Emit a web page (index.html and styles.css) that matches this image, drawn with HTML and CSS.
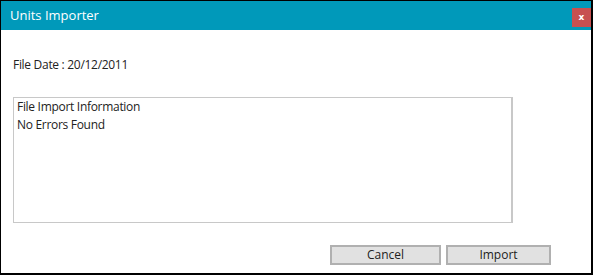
FILE: index.html
```html
<!DOCTYPE html>
<html>
<head>
    <title>Units Importer</title>
    <link rel="stylesheet" href="styles.css">
</head>
<body>
    <div class="window">
        <div class="titlebar">
            <span class="title">Units Importer</span>
            <button class="close-button">x</button>
        </div>
        <div class="content">
            <div class="file-date">File Date : 20/12/2011</div>
            <div class="log-box">
                <div>File Import Information</div>
                <div>No Errors Found</div>
            </div>
            <div class="actions">
                <button class="button cancel">Cancel</button>
                <button class="button import">Import</button>
            </div>
        </div>
    </div>
</body>
</html>
```

FILE: styles.css
```css
body {
    margin: 0;
    font-family: "Open Sans", "Noto Sans", sans-serif;
    font-size: 12px;
    color: #222;
}
.window {
    width: 593px;
    height: 275px;
    box-sizing: border-box;
    border: 1px solid #000;
    border-right-width: 2px;
    border-bottom-width: 2px;
    background-color: white;
    display: flex;
    flex-direction: column;
}
.titlebar {
    height: 29px;
    flex-shrink: 0;
    background-color: #0099ba;
    display: flex;
    justify-content: space-between;
    align-items: flex-start;
    padding-left: 9px;
}
.title {
    color: white;
    font-size: 13px;
    line-height: 29px;
}
.close-button {
    margin-top: 7px;
    width: 19px;
    height: 19px;
    padding: 0;
    border: none;
    background-color: #c75050;
    color: white;
    font-family: "DejaVu Sans", sans-serif;
    font-weight: bold;
    font-size: 9px;
    line-height: 17px;
}
.content {
    flex: 1;
    padding: 26px 0 0 12px;
    display: flex;
    flex-direction: column;
    letter-spacing: -0.3px;
}
.file-date {
    line-height: 18px;
}
.log-box {
    width: 500px;
    height: 126px;
    box-sizing: border-box;
    margin-top: 23px;
    border: 1px solid #c8c8c8;
    border-right-width: 2px;
    padding: 0 3px;
    line-height: 18px;
}
.actions {
    display: flex;
    gap: 5px;
    margin: 22px 0 0 317px;
}
.button {
    height: 20px;
    box-sizing: border-box;
    border: 2px solid #b0b0b0;
    background-color: #e1e1e1;
    font-family: inherit;
    font-size: 12px;
    color: #222;
    padding: 0;
    line-height: 16px;
}
.cancel {
    width: 111px;
}
.import {
    width: 105px;
}
```
